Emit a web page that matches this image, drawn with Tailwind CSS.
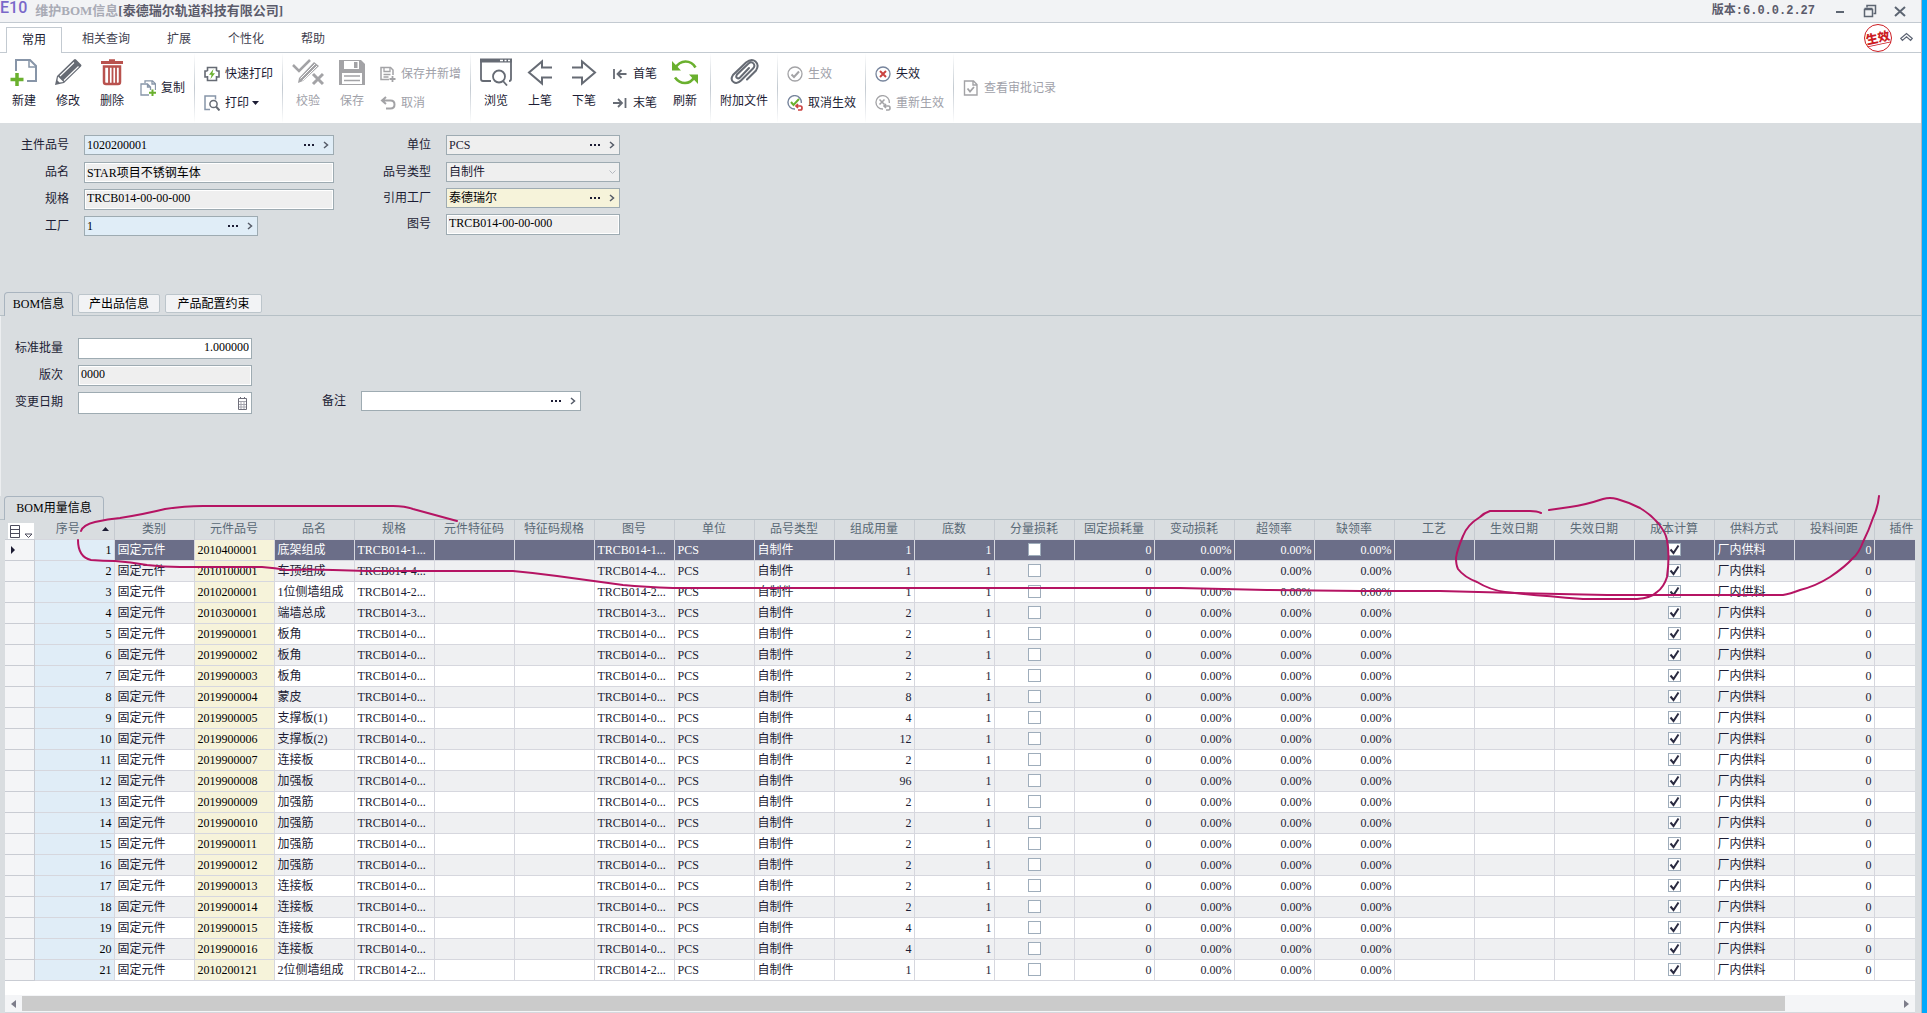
<!DOCTYPE html>
<html lang="zh-CN">
  <head>
    <meta charset="UTF-8" />
    <meta name="viewport" content="width=device-width, initial-scale=1.0" />
    <title>维护BOM信息</title>
    <script src="https://cdn.jsdelivr.net/npm/@tailwindcss/browser@4"></script>
  </head>
  <body
    class="relative flex min-h-screen overflow-x-hidden bg-[#d9dde0] font-['Liberation_Serif','Noto_Sans_CJK_SC',serif] text-[12px] leading-4 text-[#1c1c34]"
  >
    <div class="flex min-w-0 flex-1 flex-col border-r border-[#b4b4bc]">
      <!-- Title bar -->
      <header class="flex h-[23px] items-center border-b border-[#c3cad1] bg-[#f2f3f5] text-[13px] font-bold text-[#5b5b6b]">
        <span class="self-start font-['Roboto',sans-serif] text-[16px] leading-4 font-medium text-[#7a68c9]">E10</span>
        <h1 class="ml-2 flex">
          <span class="text-[#a9abb5]">维护BOM信息</span>
          <span>[泰德瑞尔轨道科技有限公司]</span>
        </h1>
        <span class="ml-auto font-['Liberation_Mono','Noto_Sans_CJK_SC',monospace] text-[12px]">版本:6.0.0.2.27</span>
        <div class="flex items-center gap-4 pr-[14px] pl-[18px]">
          <button type="button" aria-label="最小化">
            <svg width="14" height="14"><path d="M3 8h8" stroke="#5d6572" stroke-width="2" /></svg>
          </button>
          <button type="button" aria-label="还原">
            <svg width="14" height="14" fill="none" stroke="#5d6572"><path d="M4 3.500V1.500H12.500V9.500H10.500" stroke-width="1.500" /><path d="M1.500 5.500H9.500V12.500H1.500zM1.500 4.500H9.500" stroke-width="1.500" /></svg>
          </button>
          <button type="button" aria-label="关闭">
            <svg width="14" height="14"><path d="M2 3l10 9M12 3L2 12" stroke="#5d6572" stroke-width="2" /></svg>
          </button>
        </div>
      </header>

      <!-- Ribbon tabs -->
      <nav class="flex h-[30px] items-end gap-px border-b border-[#c3cad1] bg-white text-[#3f3f50]">
        <button type="button" class="-mb-px ml-[6px] h-[26px] border border-b-0 border-[#c3cad1] bg-white px-[15px] pb-0.5 text-[#1c1c34]">常用</button>
        <button type="button" class="ml-px h-[25px] px-[18px] pb-0.5">相关查询</button>
        <button type="button" class="h-[25px] px-[18px] pb-0.5">扩展</button>
        <button type="button" class="h-[25px] px-[18px] pb-0.5">个性化</button>
        <button type="button" class="h-[25px] px-[18px] pb-0.5">帮助</button>
        <div class="ml-auto flex items-center gap-2 pr-2">
          <div class="grid size-7 place-items-center rounded-full border-[1.5px] border-[#cc1c22]">
            <span class="-rotate-12 border-b border-[#cc1c22] text-[12px] leading-3 font-black text-[#cc1c22]">生效</span>
          </div>
          <button type="button" aria-label="收起功能区">
            <svg width="13" height="12" fill="none" stroke="#5f6675"><path d="M.700 6.500l5.800-5 5.800 5-1.700 2-4.100-3.700-4.100 3.700z" stroke-width="1.200" /></svg>
          </button>
        </div>
      </nav>

      <!-- Ribbon -->
      <div class="flex h-[70px] bg-white whitespace-nowrap">
        <div class="flex pr-[3px] pl-[2px]">
          <button type="button" class="flex w-11 flex-col items-center gap-[7px] pt-[5px]">
            <svg width="28" height="28" viewBox="0 0 28 28" fill="none"><path d="M6 13V2h14l6 6v15H17" stroke="#8795a8" stroke-width="2" /><path d="M19 2v7h7" stroke="#8795a8" stroke-width="1.500" /><path d="M7 15v13M.500 21.500h13" stroke="#6ab02e" stroke-width="3.500" /></svg>
            新建
          </button>
          <button type="button" class="flex w-11 flex-col items-center gap-[7px] pt-[5px]">
            <svg width="28" height="28" viewBox="0 0 28 28"><path d="M1 27l2-9L20 1.500q1-1 2 0l5 5q1 1 0 2L10 25z" fill="#666b74" /><path d="M6 18L20 4.500M10 22.500L24.500 8.500" stroke="#fff" stroke-width="1.100" /><path d="M4 18.500l5.500 5.500-4 .500-2-2z" fill="#fff" /></svg>
            修改
          </button>
          <button type="button" class="flex w-11 flex-col items-center gap-[7px] pt-[5px]">
            <svg width="28" height="28" viewBox="0 0 28 28" fill="none" stroke="#b9524e"><path d="M3 4.500h22" stroke-width="3" /><path d="M11 2.500h6" stroke-width="2.500" /><path d="M6 8.500h16V24q0 2-2 2H8q-2 0-2-2z" stroke-width="2.500" /><path d="M11 9v16M14.500 9v16M18 9v16" stroke-width="1.800" /></svg>
            删除
          </button>
          <button type="button" class="flex h-full items-center gap-[5px] px-[6px]">
            <svg width="16" height="16" viewBox="0 0 16 16" fill="none"><path d="M5 3V.800h7.500l3 3V10M9 15H1V4h6.500l3 3v3M7.500 4v3h3M12 1v3h3" stroke="#8795a8" stroke-width="1.300" /><path d="M12.500 9.500V16M9 12.800h7" stroke="#6ab02e" stroke-width="2" /></svg>
            复制
          </button>
        </div>
        <div class="w-px bg-linear-to-b from-white via-[#c3cad1] to-white"></div>
        <div class="flex flex-col items-start justify-center px-[3px]">
          <button type="button" class="flex h-[29px] items-center gap-[5px] px-[6px]">
            <svg width="16" height="16" viewBox="0 0 16 16" fill="none" stroke="#666b74" stroke-width="1.600"><path d="M3.500 5V1.500h9V5M3.500 5H1v6h2.500M12.500 5H15v6h-2.500M3.500 10v4.500h9V10" /><path d="M9.500 3L5 8.800h2.600L6.500 13 11 7.200H8.400z" fill="#6ab02e" stroke="none" /></svg>
            快速打印
          </button>
          <button type="button" class="flex h-[29px] items-center gap-[5px] px-[6px]">
            <svg width="16" height="16" viewBox="0 0 16 16" fill="none"><path d="M6 14.500H1V1h10.500v3.500" stroke="#8795a8" stroke-width="1.500" /><circle cx="9.500" cy="9" r="3.600" stroke="#666b74" stroke-width="1.500" /><path d="M12 11.500l3.500 4" stroke="#666b74" stroke-width="2" /></svg>
            打印
            <svg class="-ml-0.5" width="7" height="4"><path d="M0 0h7L3.500 4z" fill="#1c1c34" /></svg>
          </button>
        </div>
        <div class="w-px bg-linear-to-b from-white via-[#c3cad1] to-white"></div>
        <div class="flex px-[3px] text-[#a0a1a9]">
          <button type="button" class="flex w-11 flex-col items-center gap-[7px] pt-[5px]" disabled>
            <svg width="32" height="28" viewBox="0 0 32 28" fill="none" stroke="#a3a3a6"><path d="M1 7l6 6L18 2" stroke-width="2.500" /><path d="M6 25l1-5L22 4l5 4-16 15z" fill="#a3a3a6" stroke="none" /><path d="M8.500 20.500L23 6M10.500 22.500L25 8" stroke="#fff" /><path d="M21 16l10 10M31 16L21 26" stroke-width="3" /></svg>
            校验
          </button>
          <button type="button" class="flex w-11 flex-col items-center gap-[7px] pt-[5px]" disabled>
            <svg width="28" height="28" viewBox="0 0 28 28"><path d="M1 2h22l4 4v21H1z" fill="#a3a3a6" /><path d="M6 3h15v8H6zM4 15h20v11H4z" fill="#fff" /><path d="M16 4h3.500v6H16z" fill="#a3a3a6" /><path d="M6 18h16M6 22.500h16" stroke="#a3a3a6" stroke-width="1.500" /></svg>
            保存
          </button>
          <div class="flex flex-col items-start justify-center">
            <button type="button" class="flex h-[29px] items-center gap-[5px] px-[6px]" disabled>
              <svg width="16" height="16" viewBox="0 0 16 16" fill="none" stroke="#a3a3a6"><path d="M9 13.500H1V1.500h9.500L13 4v5" stroke-width="1.500" /><path d="M4 2v3.500h6V2M3.500 8.500h7M3.500 11h5" stroke-width="1.300" /><path d="M12.500 10v6M9.500 13h6" stroke-width="1.800" /></svg>
              保存并新增
            </button>
            <button type="button" class="flex h-[29px] items-center gap-[5px] px-[6px]" disabled>
              <svg width="16" height="16" viewBox="0 0 16 16" fill="none" stroke="#a3a3a6" stroke-width="2"><path d="M6 2L2 5.500 6 9M2 5.500h8.500q4 0 4 4t-4 4H6" /></svg>
              取消
            </button>
          </div>
        </div>
        <div class="w-px bg-linear-to-b from-white via-[#c3cad1] to-white"></div>
        <div class="flex px-[3px]">
          <button type="button" class="flex w-11 flex-col items-center gap-[7px] pt-[5px]">
            <svg width="32" height="28" viewBox="0 0 32 28" fill="none" stroke="#666b74"><path d="M11 23H3q-2 0-2-2V2h30v19q0 2-2 2" stroke-width="1.800" /><path d="M0 2.500h32" stroke-width="4" /><path d="M20 2.500h3M24.500 2.500h2M28 2.500h2" stroke="#fff" stroke-width="1.500" /><circle cx="19" cy="18.500" r="6" stroke-width="1.800" /><path d="M23 23l4 4.500" stroke-width="1.800" /></svg>
            浏览
          </button>
          <button type="button" class="flex w-11 flex-col items-center gap-[7px] pt-[5px]">
            <svg width="28" height="28" viewBox="0 0 28 28" fill="none" stroke="#666b74" stroke-width="2"><path d="M26 9.500H16V3.500L3 14.500 16 25.500V19.500H26" /></svg>
            上笔
          </button>
          <button type="button" class="flex w-11 flex-col items-center gap-[7px] pt-[5px]">
            <svg width="28" height="28" viewBox="0 0 28 28" fill="none" stroke="#666b74" stroke-width="2"><path d="M2 9.500H12V3.500L25 14.500 12 25.500V19.500H2" /></svg>
            下笔
          </button>
          <div class="flex flex-col items-start justify-center">
            <button type="button" class="flex h-[29px] items-center gap-[5px] px-[6px]">
              <svg width="16" height="16" viewBox="0 0 16 16" fill="none" stroke="#666b74" stroke-width="1.800"><path d="M2 3v10M14.500 8H6M9.500 4l-4 4 4 4" /></svg>
              首笔
            </button>
            <button type="button" class="flex h-[29px] items-center gap-[5px] px-[6px]">
              <svg width="16" height="16" viewBox="0 0 16 16" fill="none" stroke="#666b74" stroke-width="1.800"><path d="M13.500 3v10M1 8h8.500M6 4l4 4-4 4" /></svg>
              末笔
            </button>
          </div>
          <button type="button" class="flex w-11 flex-col items-center gap-[7px] pt-[5px]">
            <svg width="28" height="28" viewBox="0 0 28 28" fill="none" stroke="#6ab02e" stroke-width="2.600"><path d="M4 10.500Q8 3.500 14.500 3.500T24.500 9.500" /><path d="M24 18.500Q20 25 14 25T4 19.500" /><path d="M1 3v9.500h9zM27 26v-9.500h-9z" fill="#6ab02e" stroke="none" /></svg>
            刷新
          </button>
        </div>
        <div class="w-px bg-linear-to-b from-white via-[#c3cad1] to-white"></div>
        <div class="flex px-[3px]">
          <button type="button" class="flex w-[60px] flex-col items-center gap-[7px] pt-[5px]">
            <svg width="30" height="28" viewBox="0 0 30 28" fill="none" stroke="#666b74" stroke-width="2" stroke-linecap="round"><path d="M20 10l-9 9.500q-1.500 1.500-3 .500t0-3.500L19.500 5.500q3-2.500 5 0t-.500 5L12 22.500q-4 4-7.500 1.500T4 17L17 4.500q5.500-4.500 9.500-1t.500 9L18 21.500" /></svg>
            附加文件
          </button>
        </div>
        <div class="w-px bg-linear-to-b from-white via-[#c3cad1] to-white"></div>
        <div class="flex flex-col items-start justify-center px-[3px]">
          <button type="button" class="flex h-[29px] items-center gap-[5px] px-[6px] text-[#a0a1a9]" disabled>
            <svg width="16" height="16" viewBox="0 0 16 16" fill="none" stroke="#a3a3a6"><circle cx="8" cy="8" r="7" stroke-width="1.300" /><path d="M4.500 8.500L7 11l5-5.500" stroke-width="2" /></svg>
            生效
          </button>
          <button type="button" class="flex h-[29px] items-center gap-[5px] px-[6px]">
            <svg width="16" height="16" viewBox="0 0 16 16" fill="none"><path d="M8 14A6.700 6.700 0 1 1 14.300 8" stroke="#76849c" stroke-width="1.400" /><path d="M4 7l2.500 3L12 4" stroke="#6ab02e" stroke-width="2" /><path d="M11 9l-2 2 2 2M9 11h4.500q1.500 0 1.500 2t-1.500 2H11" stroke="#cb4341" stroke-width="1.700" /></svg>
            取消生效
          </button>
        </div>
        <div class="w-px bg-linear-to-b from-white via-[#c3cad1] to-white"></div>
        <div class="flex flex-col items-start justify-center px-[3px]">
          <button type="button" class="flex h-[29px] items-center gap-[5px] px-[6px]">
            <svg width="16" height="16" viewBox="0 0 16 16" fill="none"><circle cx="8" cy="8" r="7" stroke="#76849c" stroke-width="1.300" /><path d="M5 5l6 6M11 5l-6 6" stroke="#cb4341" stroke-width="2" /></svg>
            失效
          </button>
          <button type="button" class="flex h-[29px] items-center gap-[5px] px-[6px] text-[#a0a1a9]" disabled>
            <svg width="16" height="16" viewBox="0 0 16 16" fill="none" stroke="#a3a3a6"><path d="M8 14A6.700 6.700 0 1 1 14.300 8" stroke-width="1.300" /><path d="M4.500 4.500l5 5M9.500 4.500l-5 5" stroke-width="1.600" /><path d="M11 9l-2 2 2 2M9 11h4.500q1.500 0 1.500 2t-1.500 2H11" stroke-width="1.600" /></svg>
            重新生效
          </button>
        </div>
        <div class="w-px bg-linear-to-b from-white via-[#c3cad1] to-white"></div>
        <div class="flex px-[3px]">
          <button type="button" class="flex items-center gap-[5px] px-[6px] text-[#a0a1a9]" disabled>
            <svg width="16" height="16" viewBox="0 0 16 16" fill="none" stroke="#a3a3a6"><path d="M1.500 1h9L14 4.500V15H1.500zM10 1v4h4" stroke-width="1.400" /><path d="M4.500 8.500l2.500 3 4-4.500" stroke-width="1.800" /></svg>
            查看审批记录
          </button>
        </div>
      </div>

      <!-- BOM header fields -->
      <section class="flex h-[169px] gap-[46px] pt-3">
        <div class="flex flex-col gap-[6px]">
          <div class="flex h-[21px] items-start">
            <label for="itemCode" class="w-[84px] pt-0.5 pr-[15px] text-right">主件品号</label>
            <div class="lookup flex h-5 w-[250px] items-center border border-[#9eabb2] bg-[#e0edf7]">
              <input id="itemCode" class="min-w-0 flex-1 px-0.5 text-black outline-none" value="1020200001" />
            </div>
          </div>
          <div class="flex h-[21px] items-start">
            <label for="itemName" class="w-[84px] pt-0.5 pr-[15px] text-right">品名</label>
            <input id="itemName" readonly class="h-[21px] w-[250px] border border-[#9eabb2] bg-[#efefef] px-0.5 pb-0.5 text-black shadow-[inset_0_0_0_1px_white]" value="STAR项目不锈钢车体" />
          </div>
          <div class="flex h-[21px] items-start">
            <label for="itemSpec" class="w-[84px] pt-0.5 pr-[15px] text-right">规格</label>
            <input id="itemSpec" readonly class="h-[21px] w-[250px] border border-[#9eabb2] bg-[#efefef] px-0.5 pb-0.5 text-black shadow-[inset_0_0_0_1px_white]" value="TRCB014-00-00-000" />
          </div>
          <div class="flex h-[21px] items-start">
            <label for="plant" class="w-[84px] pt-0.5 pr-[15px] text-right">工厂</label>
            <div class="lookup flex h-5 w-[174px] items-center border border-[#9eabb2] bg-[#e0edf7]">
              <input id="plant" class="min-w-0 flex-1 px-0.5 text-black outline-none" value="1" />
            </div>
          </div>
        </div>
        <div class="flex flex-col gap-[5px]">
          <div class="flex h-[21px] items-start">
            <label for="unit" class="w-[66px] pt-0.5 pr-[15px] text-right">单位</label>
            <div class="lookup flex h-5 w-[174px] items-center border border-[#9eabb2] bg-[#efefef]">
              <input id="unit" class="min-w-0 flex-1 px-0.5 outline-none" value="PCS" />
            </div>
          </div>
          <div class="flex h-[22px] items-start pt-px">
            <label for="itemType" class="w-[66px] pt-0.5 pr-[15px] text-right">品号类型</label>
            <div class="relative">
              <select id="itemType" class="h-5 w-[174px] appearance-none border border-[#9eabb2] bg-[#efefef] px-0.5">
                <option>自制件</option>
              </select>
              <svg class="pointer-events-none absolute top-2 right-1" width="7" height="5" fill="none" stroke="#b5b9c0"><path d="M.500.500l3 3 3-3" /></svg>
            </div>
          </div>
          <div class="flex h-[21px] items-start">
            <label for="refPlant" class="w-[66px] pt-0.5 pr-[15px] text-right">引用工厂</label>
            <div class="lookup flex h-5 w-[174px] items-center border border-[#9eabb2] bg-[#f6f3da]">
              <input id="refPlant" class="min-w-0 flex-1 px-0.5 text-black outline-none" value="泰德瑞尔" />
            </div>
          </div>
          <div class="flex h-[21px] items-start">
            <label for="drawingNo" class="w-[66px] pt-0.5 pr-[15px] text-right">图号</label>
            <input id="drawingNo" readonly class="h-[21px] w-[174px] border border-[#9eabb2] bg-[#efefef] px-0.5 pb-0.5 text-black shadow-[inset_0_0_0_1px_white]" value="TRCB014-00-00-000" />
          </div>
        </div>
      </section>

      <!-- Info tabs -->
      <div class="flex h-6 items-start gap-[5px] border-b border-[#b6c0c6] pl-1 text-black">
        <button type="button" class="h-6 w-[69px] rounded-t-sm border border-b-0 border-[#a9b4bf] bg-[#d9dde0] pb-0.5">BOM信息</button>
        <button type="button" class="mt-0.5 h-[19px] w-[82px] rounded-xs border border-[#bcc5cb] bg-[#f2f3f5]">产出品信息</button>
        <button type="button" class="mt-0.5 h-[19px] w-[97px] rounded-xs border border-[#bcc5cb] bg-[#f2f3f5]">产品配置约束</button>
      </div>

      <section class="flex h-[180px] items-start gap-[57px] border-l border-[#eceef0] pt-[22px]">
        <div class="flex flex-col gap-[6px]">
          <div class="flex h-[21px] items-start">
            <label for="batchQty" class="w-[77px] pt-0.5 pr-[15px] text-right">标准批量</label>
            <input id="batchQty" class="h-[21px] w-[174px] border border-[#9eabb2] bg-white px-0.5 pb-0.5 text-right text-black" value="1.000000" />
          </div>
          <div class="flex h-[21px] items-start">
            <label for="revision" class="w-[77px] pt-0.5 pr-[15px] text-right">版次</label>
            <input id="revision" readonly class="h-[21px] w-[174px] border border-[#9eabb2] bg-[#efefef] px-0.5 pb-0.5 text-black shadow-[inset_0_0_0_1px_white]" value="0000" />
          </div>
          <div class="flex h-[21px] items-start">
            <label for="changeDate" class="w-[77px] pt-0.5 pr-[15px] text-right">变更日期</label>
            <div class="flex h-[22px] w-[174px] items-center border border-[#9eabb2] bg-white pr-[3px]">
              <input id="changeDate" class="min-w-0 flex-1 px-0.5 outline-none" />
              <button type="button" aria-label="选择日期">
                <svg width="11" height="13" fill="none" stroke="#6e6e7a"><path d="M1.500 1.500h8v11h-8zM3.500 0v2M7.500 0v2" /><path d="M2 4.500h7M2 7.500h7M2 10h7M4 4v8M7 4v8" stroke="#a5a5ae" /></svg>
              </button>
            </div>
          </div>
        </div>
        <div class="flex items-start self-start pt-[53px]">
          <label for="remark" class="w-[52px] pt-0.5 pr-[15px] text-right">备注</label>
          <div class="lookup flex h-5 w-[220px] items-center border border-[#9eabb2] bg-white">
            <input id="remark" class="min-w-0 flex-1 px-0.5 outline-none" />
          </div>
        </div>
      </section>

      <!-- Component grid -->
      <div class="flex h-6 border-b border-[#b6c0c6] pl-1 text-black">
        <button type="button" class="h-6 w-[100px] rounded-t-sm border border-b-0 border-[#a9b4bf] bg-[#d9dde0] pb-0.5">BOM用量信息</button>
      </div>
      <div class="mr-[6px] ml-[5px] flex flex-1 flex-col overflow-hidden bg-white">
        <table class="w-full table-fixed border-collapse">
          <thead class="bg-[#d9dde0] text-[#5a6976]">
            <tr id="headRow" class="h-[19px]">
              <th class="w-[29px] p-0 align-bottom">
                <button type="button" aria-label="列设置" class="ml-[3px] flex h-4 w-[26px] items-end justify-center gap-[3px] bg-white">
                  <svg class="mb-px" width="11" height="13" fill="none" stroke="#4c4c5c"><path d="M.500.500h9v12h-9zM0 4.500h10M0 8.500h10" /></svg>
                  <svg width="9" height="6" fill="none" stroke="#4c4c5c"><path d="M1 1h7L4.500 4.500z" /></svg>
                </button>
              </th>
              <th class="w-20 border-r border-[#c5cad0] py-0 pr-[5px] font-normal">
                <div class="flex items-center">
                  <span class="flex-1 text-center">序号</span>
                  <svg width="7" height="4"><path d="M0 4h7L3.500 0z" fill="#1c1c34" /></svg>
                </div>
              </th>
            </tr>
          </thead>
          <tbody id="bomRows"></tbody>
        </table>
        <!-- Horizontal scroll bar -->
        <div class="mt-auto flex h-[18px] items-center border-b border-[#d5d8dd] bg-[#f4f5f7]">
          <button type="button" aria-label="向左滚动" class="grid w-[17px] place-items-center">
            <svg width="5" height="8"><path d="M5 0v8L0 4z" fill="#7d7d8a" /></svg>
          </button>
          <div class="flex-1">
            <div class="h-[15px] w-[94%] bg-[#cbcbcb]"></div>
          </div>
          <button type="button" aria-label="向右滚动" class="grid w-[17px] place-items-center">
            <svg width="5" height="8"><path d="M0 0v8l5-4z" fill="#7d7d8a" /></svg>
          </button>
        </div>
      </div>
    </div>
    <div class="w-[5px] bg-[#00a9fc]"></div>

    <!-- Pen marks over the grid -->
    <svg class="pointer-events-none absolute top-0 left-0" width="1920" height="620" fill="none" stroke="#b51463" stroke-width="2" stroke-linecap="round" stroke-linejoin="round">
      <path d="M81 531Q83 525 95 522Q108 519 120 518Q145 514 165 509Q185 506 203 506H393Q405 506 413 509L457 521" />
      <path d="M78 540Q78 557 91 560Q103 561 115 561Q130 562 147 565Q163 567 180 567H262Q275 568 287 570Q310 569 333 570L367 571H513Q535 573 557 576L623 585Q645 587 673 588H1180L1267 590L1360 591H1440L1517 593L1607 595H1783Q1790 594 1800 590Q1816 586 1830 577Q1845 567 1853 558Q1859 553 1863 542Q1869 530 1873 518Q1878 507 1879 496" />
      <path d="M1541 513Q1537 511 1530 511H1490Q1484 513 1480 517Q1467 525 1463 536Q1457 550 1456 558Q1456 565 1458 569Q1464 577 1477 582Q1490 590 1505 592Q1530 595 1583 599H1637Q1651 598 1657 592Q1664 587 1667 577Q1670 555 1667 540Q1666 533 1658 523Q1650 514 1640 508Q1628 502 1617 499Q1610 497 1603 499Q1585 505 1570 507L1549 510" />
    </svg>

    <script>
      // Lookup fields all end with the same two buttons
      document.querySelectorAll(".lookup").forEach((box) => {
        box.insertAdjacentHTML(
          "beforeend",
          `<button type="button" aria-label="选择" class="mr-[9px]"><svg width="10" height="4"><path d="M0 1h2v2H0zM4 1h2v2H4zM8 1h2v2H8z" fill="#1c1c34" /></svg></button>
           <button type="button" aria-label="打开" class="mr-1"><svg width="6" height="8" fill="none" stroke="#555b68" stroke-width="1.500"><path d="M1 1l3.500 3L1 7" /></svg></button>`
        );
      });

      const headers = [
        "类别", "元件品号", "品名", "规格", "元件特征码", "特征码规格", "图号", "单位",
        "品号类型", "组成用量", "底数", "分量损耗", "固定损耗量", "变动损耗", "超领率",
        "缺领率", "工艺", "生效日期", "失效日期", "成本计算", "供料方式", "投料间距",
      ];
      const headRow = document.getElementById("headRow");
      headers.forEach((name) => {
        headRow.insertAdjacentHTML(
          "beforeend",
          `<th class="w-20 border-r border-[#c5cad0] p-0 font-normal">${name}</th>`
        );
      });
      headRow.insertAdjacentHTML("beforeend", `<th class="py-0 pr-0 pl-[15px] text-left font-normal">插件</th>`);

      // [元件品号, 品名, 规格, 组成用量]
      const rows = [
        ["2010400001", "底架组成", "TRCB014-1...", 1],
        ["2010100001", "车顶组成", "TRCB014-4...", 1],
        ["2010200001", "1位侧墙组成", "TRCB014-2...", 1],
        ["2010300001", "端墙总成", "TRCB014-3...", 2],
        ["2019900001", "板角", "TRCB014-0...", 2],
        ["2019900002", "板角", "TRCB014-0...", 2],
        ["2019900003", "板角", "TRCB014-0...", 2],
        ["2019900004", "蒙皮", "TRCB014-0...", 8],
        ["2019900005", "支撑板(1)", "TRCB014-0...", 4],
        ["2019900006", "支撑板(2)", "TRCB014-0...", 12],
        ["2019900007", "连接板", "TRCB014-0...", 2],
        ["2019900008", "加强板", "TRCB014-0...", 96],
        ["2019900009", "加强筋", "TRCB014-0...", 2],
        ["2019900010", "加强筋", "TRCB014-0...", 2],
        ["2019900011", "加强筋", "TRCB014-0...", 2],
        ["2019900012", "加强筋", "TRCB014-0...", 2],
        ["2019900013", "连接板", "TRCB014-0...", 2],
        ["2019900014", "连接板", "TRCB014-0...", 2],
        ["2019900015", "连接板", "TRCB014-0...", 4],
        ["2019900016", "连接板", "TRCB014-0...", 4],
        ["2010200121", "2位侧墙组成", "TRCB014-2...", 1],
      ];

      const left = (v) => `<td class="border border-[#d6d7de] py-0 pr-0 pl-[3px] whitespace-nowrap">${v}</td>`;
      const right = (v) => `<td class="border border-[#d6d7de] py-0 pr-[2px] pl-0 text-right">${v}</td>`;
      const check = (label, on) => `<td class="border border-[#d6d7de] p-0">
        <div class="grid place-items-center">
          <input type="checkbox" aria-label="${label}" ${on ? "checked" : ""} class="size-[13px] appearance-none border border-[#9fadbb] bg-white [grid-area:1/1]" />
          ${on ? `<svg class="pointer-events-none [grid-area:1/1]" width="11" height="11" fill="none" stroke="#2a2a40" stroke-width="2"><path d="M1.500 5.500l3 3.500L9.500 1.500" /></svg>` : ""}
        </div></td>`;

      document.getElementById("bomRows").innerHTML = rows
        .map(([code, name, spec, qty], i) => {
          const color = i === 0 ? "bg-[#6b6e88] text-white" : i % 2 ? "bg-[#eff0f2]" : "bg-white";
          const marker = i === 0 ? `<svg class="ml-[6px]" width="4" height="8"><path d="M0 0v8l4-4z" fill="#1c1c34" /></svg>` : "";
          return `<tr class="h-[21px] ${color}">
            <td class="border border-l-0 border-[#c9ccd3] bg-[#f4f5f7] p-0">${marker}</td>
            <td class="border border-[#d6d7de] bg-[#e0edf7] py-0 pr-[2px] pl-0 text-right text-black">${i + 1}</td>
            ${left("固定元件")}
            <td class="border border-[#d6d7de] bg-[#f6f3da] py-0 pr-0 pl-[3px] text-black">${code}</td>
            ${left(name)}${left(spec)}${left("")}${left("")}${left(spec)}${left("PCS")}${left("自制件")}
            ${right(qty)}${right(1)}${check("分量损耗", false)}${right(0)}
            ${right("0.00%")}${right("0.00%")}${right("0.00%")}
            ${left("")}${left("")}${left("")}${check("成本计算", true)}${left("厂内供料")}${right(0)}
            <td class="border border-r-0 border-[#d6d7de] p-0"></td>
          </tr>`;
        })
        .join("");
    </script>
  </body>
</html>
